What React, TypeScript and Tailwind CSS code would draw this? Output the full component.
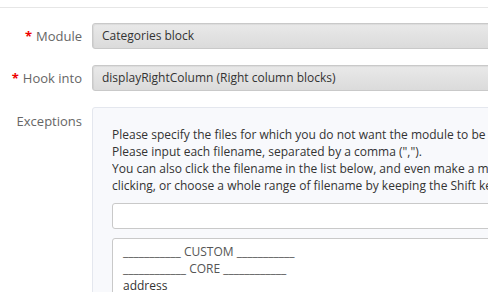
import React from "react";

const FONT = { fontFamily: '"Open Sans", "Noto Sans", sans-serif' };

function Label({ text, required }: { text: string; required?: boolean }) {
  return (
    <div className="w-[82px] shrink-0 text-right text-[13px] leading-[26px] text-[#666]">
      {required && <span className="mr-1 font-bold text-[#e00]">*</span>}
      {text}
    </div>
  );
}

function FakeSelect({ value }: { value: string }) {
  return (
    <div className="h-[26px] w-[420px] shrink-0 rounded-[3px] border border-[#c9c9c9] bg-gradient-to-b from-[#e9e9e9] to-[#dbdbdb] px-[9px] text-[12px] leading-[24px] text-[#333] shadow-[inset_1px_1px_1px_rgba(0,0,0,0.06)]">
      {value}
    </div>
  );
}

export default function App() {
  return (
    <div className="h-[292px] w-[488px] overflow-hidden bg-white" style={FONT}>
      <div className="mt-[7px] h-px bg-[#e6e6e6]"></div>

      <div className="flex flex-col gap-4 pt-[15px]">
        <div className="flex items-center gap-[10px]">
          <Label text="Module" required />
          <FakeSelect value="Categories block" />
        </div>

        <div className="flex items-center gap-[10px]">
          <Label text="Hook into" required />
          <FakeSelect value="displayRightColumn (Right column blocks)" />
        </div>

        <div className="flex items-start gap-[10px]">
          <div className="w-[82px] shrink-0 pt-[6px] text-right text-[13px] leading-[17px] text-[#666]">
            Exceptions
          </div>
          <div className="w-[440px] shrink-0 rounded-[3px] border border-[#e4e7ee] bg-[#f8f9fc] px-[19px] pt-[18px] pb-4">
            <div className="w-[400px] overflow-hidden whitespace-nowrap text-[12px] leading-[17px] text-[#333]">
              <p>Please specify the files for which you do not want the module to be displayed.</p>
              <p>Please input each filename, separated by a comma (",").</p>
              <p>You can also click the filename in the list below, and even make a multiple selection.</p>
              <p>clicking, or choose a whole range of filename by keeping the Shift key pressed.</p>
            </div>
            <div className="mt-[9px] h-[26px] w-[400px] rounded-[3px] border border-[#c9c9c9] bg-white"></div>
            <div className="mt-[9px] h-[80px] w-[400px] rounded-[3px] border border-[#c9c9c9] bg-white px-[10px] py-1 text-[12px] leading-[17px] text-[#555]">
              <div>___________ CUSTOM ___________</div>
              <div>____________ CORE ____________</div>
              <div className="text-[#333]">address</div>
            </div>
          </div>
        </div>
      </div>
    </div>
  );
}
